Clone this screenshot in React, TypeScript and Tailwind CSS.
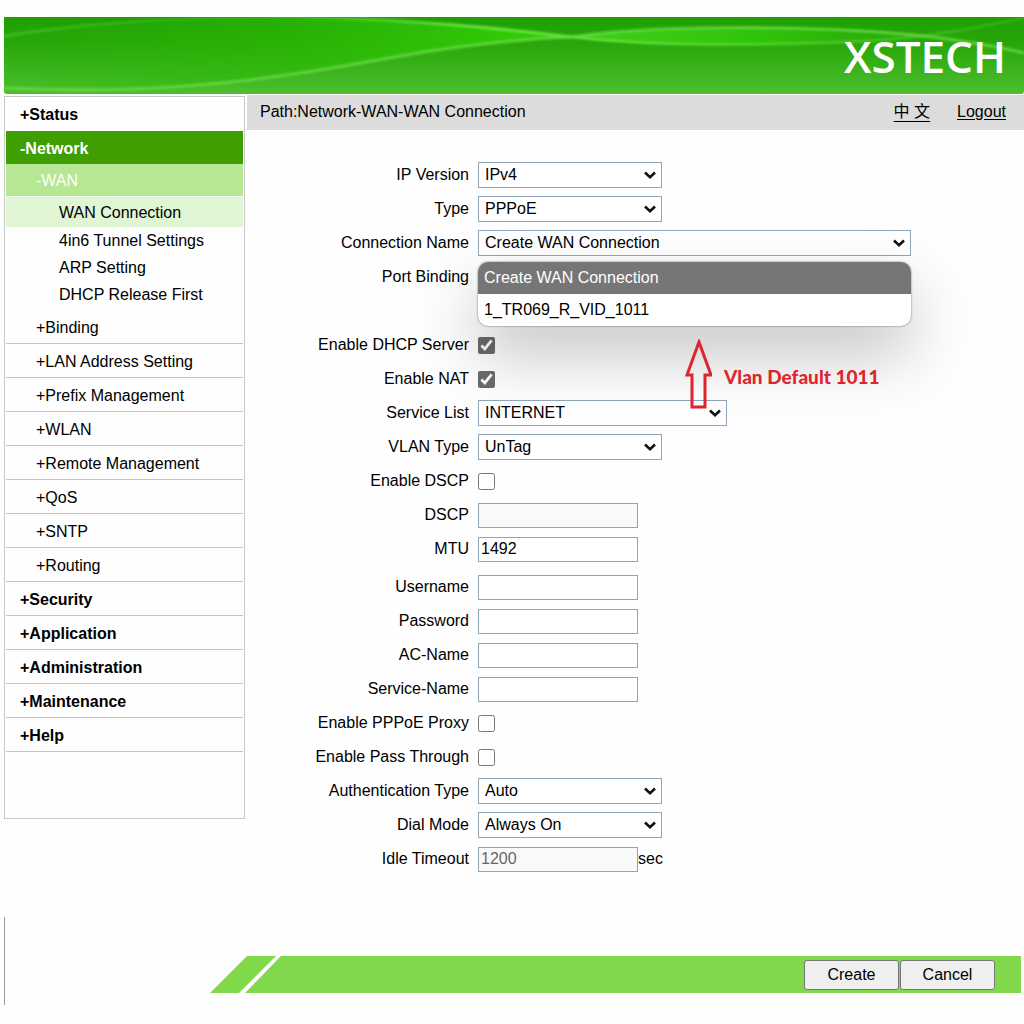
import { useState } from 'react';
import type { ReactNode } from 'react';

const SUB_MENU = ['LAN Address Setting', 'Prefix Management', 'WLAN', 'Remote Management', 'QoS', 'SNTP', 'Routing'];
const MAIN_MENU = ['Security', 'Application', 'Administration', 'Maintenance', 'Help'];
const CONNECTIONS = ['Create WAN Connection', '1_TR069_R_VID_1011'];

function Banner() {
  return (
    <header className="relative ml-1 h-[77px] overflow-hidden rounded-b-[3px]">
      <svg className="absolute inset-0 h-full w-full" viewBox="0 0 1020 77" preserveAspectRatio="none" aria-hidden="true">
        <defs>
          <linearGradient id="base" x1="0" y1="0" x2="0" y2="1">
            <stop offset="0" stopColor="#1f9f00" />
            <stop offset="0.35" stopColor="#29a70a" />
            <stop offset="1" stopColor="#4cbf2e" />
          </linearGradient>
          <linearGradient id="leaf" x1="0" y1="0" x2="1" y2="0">
            <stop offset="0" stopColor="#25b800" stopOpacity="0" />
            <stop offset="0.5" stopColor="#2aba04" stopOpacity="0.6" />
            <stop offset="1" stopColor="#34d208" />
          </linearGradient>
          <linearGradient id="lens" x1="0" y1="0" x2="1" y2="0">
            <stop offset="0" stopColor="#41cf1c" />
            <stop offset="0.5" stopColor="#30c408" />
            <stop offset="1" stopColor="#2bb009" stopOpacity="0.3" />
          </linearGradient>
          <linearGradient id="upper" x1="0" y1="0" x2="1" y2="0">
            <stop offset="0" stopColor="#6fe04a" stopOpacity="0.35" />
            <stop offset="0.25" stopColor="#6fe04a" stopOpacity="0.1" />
            <stop offset="0.48" stopColor="#74ea48" stopOpacity="0.9" />
            <stop offset="0.6" stopColor="#62dc3c" stopOpacity="0.8" />
            <stop offset="1" stopColor="#62dc3c" stopOpacity="0.25" />
          </linearGradient>
          <filter id="soft" x="-5%" y="-50%" width="110%" height="200%">
            <feGaussianBlur stdDeviation="1" />
          </filter>
        </defs>
        <rect width="1020" height="77" fill="url(#base)" />
        <path d="M0 19C90 5 180 0 270 0C370 0 470 8 568 20C520 22 480 26 420 35C310 54 190 80 0 71Z" fill="url(#leaf)" />
        <path d="M568 20C640 8 820 7 940 19C840 27 660 34 568 20Z" fill="url(#lens)" />
        <g fill="none" filter="url(#soft)">
          <path d="M0 19C90 5 180 0 270 0C370 0 470 8 568 20C660 31 800 28 880 23C940 18 985 8 1020 1" stroke="url(#upper)" strokeWidth="3" />
          <path d="M0 71C190 80 310 54 420 35C480 26 520 22 568 20C640 8 800 8 900 17C950 22 990 29 1020 36" stroke="#6fdc4a" strokeOpacity="0.75" strokeWidth="3" />
        </g>
      </svg>
      <div className="relative flex h-full items-center justify-end pr-[18px] font-['Open_Sans','Noto_Sans',sans-serif] text-[44px] font-semibold leading-none text-white">
        XSTECH
      </div>
    </header>
  );
}

function Sidebar() {
  return (
    <nav className="ml-1 mt-px w-[241px] shrink-0 self-start border border-[#c8c8c8] px-px pb-[66px]">
      <a href="#status" className="flex h-[34px] items-center pl-3.5 pt-0.5 font-bold">+Status</a>
      <a href="#network" className="flex h-[33px] items-center bg-[#3f9e00] pl-3.5 pt-0.5 font-bold text-white">-Network</a>
      <a href="#wan" className="flex h-[33px] items-center border-b border-[#f4fbf0] bg-[#b5e794] pl-[30px] pt-0.5 text-white">-WAN</a>
      <div className="pb-0.5">
        <a href="#wan-connection" className="flex h-[30px] items-center bg-[#e0f5d3] pl-[53px] pt-0.5">WAN Connection</a>
        <a href="#tunnel" className="flex h-[27px] items-center pl-[53px]">4in6 Tunnel Settings</a>
        <a href="#arp" className="flex h-[27px] items-center pl-[53px]">ARP Setting</a>
        <a href="#dhcp-release" className="flex h-[27px] items-center pl-[53px]">DHCP Release First</a>
      </div>
      <a href="#binding" className="flex h-[34px] items-center border-b border-[#c4c4c4] pl-[30px] pt-0.5">+Binding</a>
      {SUB_MENU.map((item) => (
        <a key={item} href="#" className="flex h-[34px] items-center border-b border-[#c4c4c4] pl-[30px] pt-0.5">+{item}</a>
      ))}
      {MAIN_MENU.map((item) => (
        <a key={item} href="#" className="flex h-[34px] items-center border-b border-[#c4c4c4] pl-3.5 pt-0.5 font-bold">+{item}</a>
      ))}
    </nav>
  );
}

function Row({ label, id, children }: { label: string; id: string; children: ReactNode }) {
  return (
    <div className="flex h-[34px] items-center gap-[9px]">
      <label htmlFor={id} className="w-[222px] shrink-0 text-right">{label}</label>
      <div className="flex items-center">{children}</div>
    </div>
  );
}

function Select({ id, width, options }: { id: string; width: string; options: string[] }) {
  const [value, setValue] = useState(options[0]);

  return (
    <div className={`relative ${width}`}>
      <select id={id} value={value} onChange={(e) => setValue(e.target.value)}
        className="block h-[26px] w-full appearance-none border border-[#8fa6ba] bg-white pl-1.5 pr-6">
        {options.map((option) => <option key={option}>{option}</option>)}
      </select>
      <svg className="pointer-events-none absolute right-1.5 top-[9px] h-2 w-3" viewBox="0 0 12 8" fill="none" stroke="#111" strokeWidth="2.6" aria-hidden="true">
        <path d="M1 1.5L6 6.2L11 1.5" />
      </svg>
    </div>
  );
}

function TextField({ id, initial = '', disabled = false }: { id: string; initial?: string; disabled?: boolean }) {
  const [value, setValue] = useState(initial);

  return (
    <input id={id} type={id === 'password' ? 'password' : 'text'} value={value} disabled={disabled}
      onChange={(e) => setValue(e.target.value)}
      className="h-[25px] w-40 border border-[#8fa6ba] bg-white px-0.5 disabled:bg-[#f9f9fa] disabled:text-[#666]" />
  );
}

function Checkbox({ id, initial = false }: { id: string; initial?: boolean }) {
  const [checked, setChecked] = useState(initial);

  return (
    <input id={id} type="checkbox" checked={checked} onChange={(e) => setChecked(e.target.checked)}
      className="size-[17px] accent-[#6b6b6b]" />
  );
}

function ConnectionMenu() {
  return (
    <>
      <ul className="absolute left-0 top-8 z-10 w-full overflow-hidden rounded-[10px] bg-white shadow-[0_0_2px_rgba(0,0,0,0.6),0_28px_64px_rgba(0,0,0,0.24)]">
        {CONNECTIONS.map((name, i) => (
          <li key={name} className={`flex h-8 items-center pl-1.5 ${i === 0 ? 'bg-[#767676] text-white' : ''}`}>{name}</li>
        ))}
      </ul>
      <div className="absolute left-[206px] top-[109px] z-20 flex items-center gap-3 whitespace-nowrap font-['Lato','Open_Sans',sans-serif] text-[19px] font-black text-[#dd2530]">
        <svg className="h-[72px] w-7" viewBox="0 0 28 72" fill="none" stroke="#dd2530" strokeWidth="3" aria-hidden="true">
          <path d="M15 3L3 36H8V68H21V36H27Z" />
        </svg>
        <span className="pt-1">Vlan Default 1011</span>
      </div>
    </>
  );
}

export default function App() {
  return (
    <div className="min-h-screen bg-[#fefefe] pt-[17px] font-['Liberation_Sans','Noto_Sans_CJK_SC',sans-serif] text-base text-black">
      <Banner />
      <div className="mt-px flex gap-0.5">
        <Sidebar />
        <main className="min-w-0 flex-1">
          <div className="flex h-[35px] items-center justify-between bg-[#dcdcdc] pb-0.5 pl-[13px] pr-[18px]">
            <span>Path:Network-WAN-WAN Connection</span>
            <div className="flex items-center gap-[27px]">
              <a href="#zh" lang="zh" className="underline underline-offset-4">中 文</a>
              <a href="#logout" className="underline underline-offset-2">Logout</a>
            </div>
          </div>

          <form id="wan-form" className="pt-7" onSubmit={(e) => e.preventDefault()}>
            <Row label="IP Version" id="ip-version">
              <Select id="ip-version" width="w-[184px]" options={['IPv4', 'IPv6']} />
            </Row>
            <Row label="Type" id="type">
              <Select id="type" width="w-[184px]" options={['PPPoE', 'IP']} />
            </Row>
            <Row label="Connection Name" id="connection">
              <div className="relative">
                <Select id="connection" width="w-[433px]" options={CONNECTIONS} />
                <ConnectionMenu />
              </div>
            </Row>
            <div className="h-[68px]">
              <div className="flex h-[34px] w-[222px] items-center justify-end">Port Binding</div>
            </div>
            <Row label="Enable DHCP Server" id="dhcp"><Checkbox id="dhcp" initial /></Row>
            <Row label="Enable NAT" id="nat"><Checkbox id="nat" initial /></Row>
            <Row label="Service List" id="service">
              <Select id="service" width="w-[249px]" options={['INTERNET', 'TR069']} />
            </Row>
            <Row label="VLAN Type" id="vlan">
              <Select id="vlan" width="w-[184px]" options={['UnTag', 'Tag']} />
            </Row>
            <Row label="Enable DSCP" id="enable-dscp"><Checkbox id="enable-dscp" /></Row>
            <Row label="DSCP" id="dscp"><TextField id="dscp" disabled /></Row>
            <Row label="MTU" id="mtu"><TextField id="mtu" initial="1492" /></Row>
            <div className="pt-1">
              <Row label="Username" id="username"><TextField id="username" /></Row>
              <Row label="Password" id="password"><TextField id="password" /></Row>
              <Row label="AC-Name" id="ac-name"><TextField id="ac-name" /></Row>
              <Row label="Service-Name" id="service-name"><TextField id="service-name" /></Row>
              <Row label="Enable PPPoE Proxy" id="proxy"><Checkbox id="proxy" /></Row>
              <Row label="Enable Pass Through" id="pass"><Checkbox id="pass" /></Row>
              <Row label="Authentication Type" id="auth">
                <Select id="auth" width="w-[184px]" options={['Auto', 'PAP', 'CHAP']} />
              </Row>
              <Row label="Dial Mode" id="dial">
                <Select id="dial" width="w-[184px]" options={['Always On', 'On Demand', 'Manual']} />
              </Row>
              <Row label="Idle Timeout" id="idle">
                <TextField id="idle" initial="1200" disabled />
                <span>sec</span>
              </Row>
            </div>
          </form>
        </main>
      </div>

      <footer className="ml-1 mt-[41px] border-l border-[#999] pb-3 pl-[205px] pr-[3px] pt-[39px]">
        <div className="flex h-[37px]">
          <svg className="h-[37px] w-[71px] shrink-0" viewBox="0 0 71 37" fill="#82d84b" aria-hidden="true">
            <path d="M0 37L37 0H66L29 37Z" />
            <path d="M35 37L71 0V37Z" />
          </svg>
          <div className="flex flex-1 items-center justify-end gap-px bg-[#82d84b] pr-[26px]">
            <button type="submit" form="wan-form" className="h-[30px] w-[95px] rounded-[3px] border border-[#777] bg-[#efefef]">Create</button>
            <button type="reset" form="wan-form" className="h-[30px] w-[95px] rounded-[3px] border border-[#777] bg-[#efefef]">Cancel</button>
          </div>
        </div>
      </footer>
    </div>
  );
}
